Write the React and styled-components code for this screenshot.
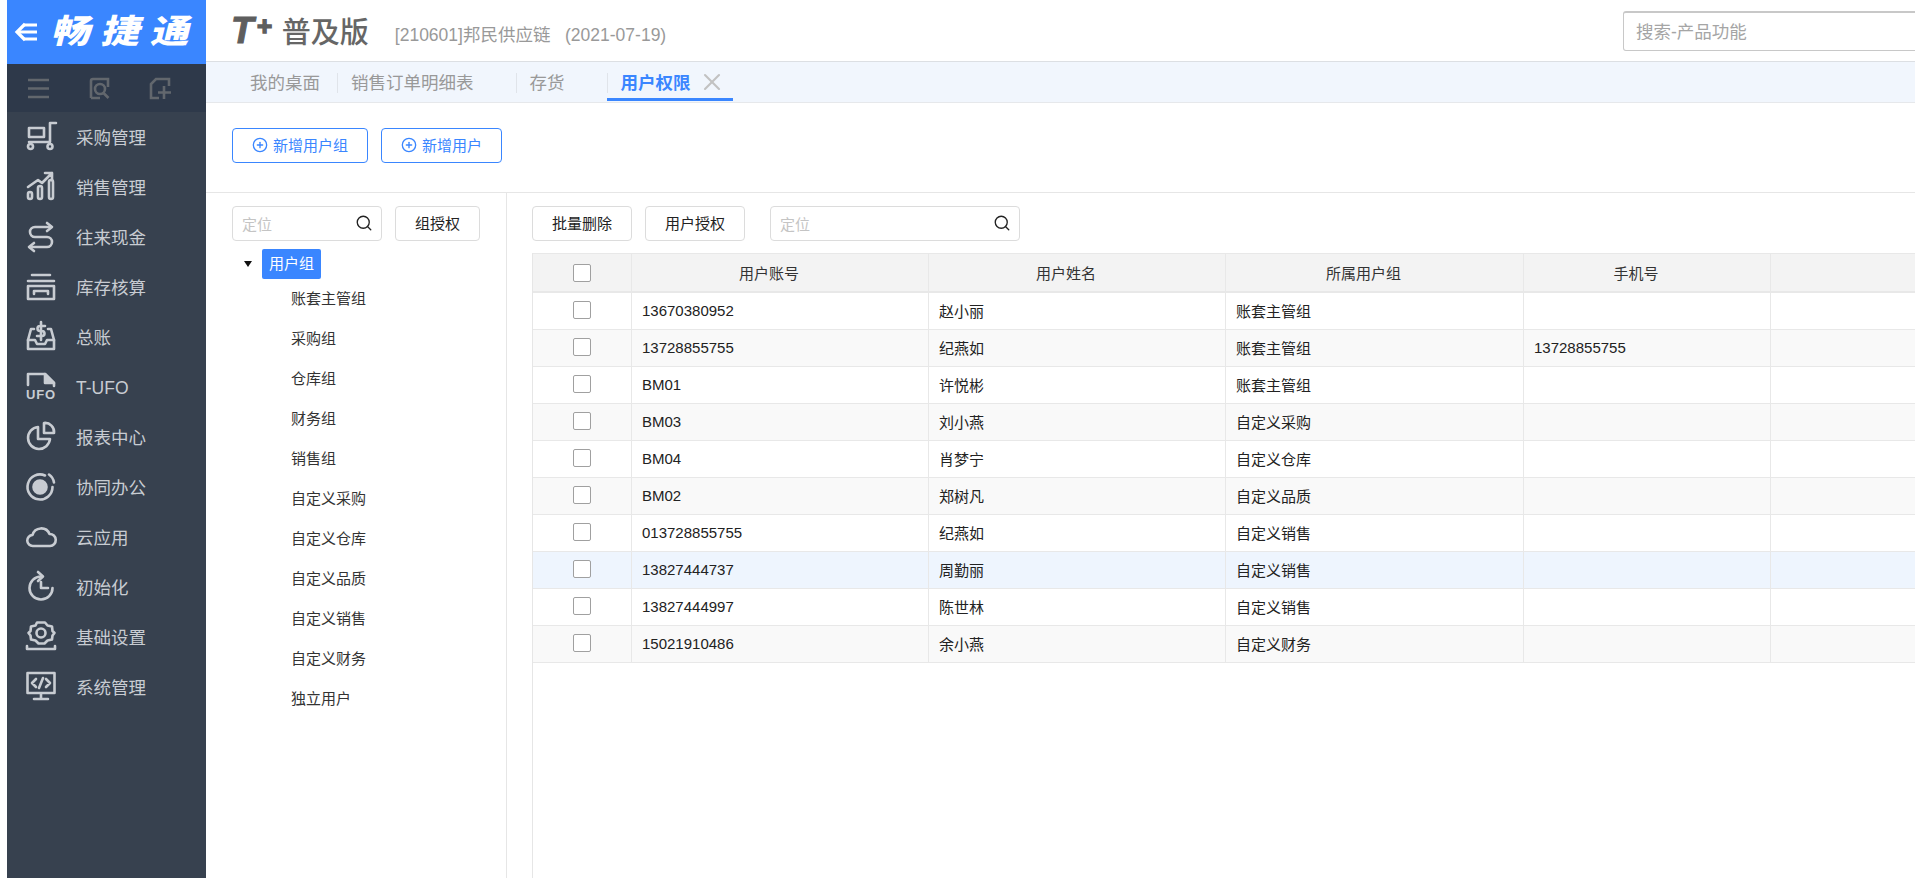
import styled, { createGlobalStyle } from "styled-components"
import { Search, CirclePlus, X } from "lucide-react"

const GlobalStyle = createGlobalStyle`
  html, body {
    margin: 0;
    height: 100%;
    overflow: hidden;
    background: #fff;
  }
  * {
    box-sizing: border-box;
  }
  body {
    font-family: "Liberation Sans", "Noto Sans CJK SC", sans-serif;
    font-size: 15px;
    color: #222;
  }
`

const Page = styled.div`
  display: flex;
  height: 878px;
  padding-left: 7px;
  overflow: hidden;
`

const Sidebar = styled.aside`
  width: 199px;
  flex-shrink: 0;
  background: #37414f;
  color: #c8ccd2;
  display: flex;
  flex-direction: column;
`

const Brand = styled.div`
  height: 64px;
  background: #3a86ff;
  color: #fff;
  display: flex;
  align-items: center;
  padding-left: 7px;
  gap: 10px;
`

const BrandName = styled.span`
  font-family: "Noto Sans CJK SC", sans-serif;
  font-weight: 900;
  font-size: 33px;
  letter-spacing: 9px;
  line-height: 1;
  white-space: nowrap;
  transform: skewX(-14deg) scaleX(1.18);
  transform-origin: left center;
  margin: -5px 0 0 6px;
`

const SideTools = styled.div`
  height: 48px;
  background: #2e394a;
  color: #62676d;
  display: flex;
  align-items: center;
  padding-left: 20px;
  gap: 38px;
`

const Menu = styled.nav`
  margin-top: -1px;
`

const MenuItem = styled.div`
  height: 50px;
  display: flex;
  align-items: center;
  padding-left: 19px;
  gap: 20px;
  font-size: 17.5px;
`

const MenuLabel = styled.span`
  line-height: 20px;
  padding-top: 3px;
`

const IconSvg = styled.svg`
  width: 30px;
  height: 30px;
  flex-shrink: 0;
  overflow: visible;
  fill: none;
  stroke: currentColor;
  stroke-width: 2.6;
  stroke-linecap: round;
  stroke-linejoin: round;
`

const ToolSvg = styled.svg`
  width: 23px;
  height: 23px;
  flex-shrink: 0;
  fill: none;
  stroke: currentColor;
  stroke-width: 2.6;
`

const Main = styled.main`
  flex: 1;
  min-width: 0;
  display: flex;
  flex-direction: column;
  overflow: hidden;
`

const Header = styled.header`
  height: 62px;
  flex-shrink: 0;
  border-bottom: 1px solid #dcdfe3;
  display: flex;
  align-items: center;
  overflow: hidden;
`

const Title = styled.div`
  flex: 0 0 1417px;
  display: flex;
  align-items: center;
  padding-left: 25px;
`

const LogoT = styled.span`
  font-weight: 700;
  font-style: italic;
  font-size: 37px;
  line-height: 1;
  color: #5e5e5e;
  -webkit-text-stroke: 1px #5e5e5e;
`

const LogoPlus = styled.span`
  font-weight: 700;
  font-style: italic;
  font-size: 26px;
  line-height: 1;
  color: #5e5e5e;
  -webkit-text-stroke: 1.5px #5e5e5e;
  margin: 0 0 10px 3px;
`

const Edition = styled.span`
  font-family: "Noto Sans CJK SC", sans-serif;
  font-weight: 500;
  font-size: 29px;
  line-height: 1;
  color: #666;
  margin-left: 10px;
`

const Account = styled.span`
  font-size: 17.5px;
  color: #999;
  margin-left: 26px;
  margin-top: 5px;
  white-space: pre;
`

const GlobalSearch = styled.div`
  flex: 0 0 320px;
  height: 40px;
  border: 1px solid #c8c8c8;
  border-top-width: 2px;
  border-radius: 3px;
  padding: 0 0 2px 12px;
  display: flex;
  align-items: center;
  font-size: 17.5px;
  color: #a5a5a5;
`

const TabBar = styled.div`
  height: 41px;
  flex-shrink: 0;
  background: #f1f6fd;
  border-bottom: 1px solid #e6e8eb;
  display: flex;
  padding-left: 29px;
`

const Tab = styled.div`
  height: 39px;
  padding-top: 11px;
  border-bottom: 3px solid ${p => (p.$active ? "#3a86ff" : "transparent")};
`

const TabInner = styled.div`
  height: 20px;
  display: flex;
  align-items: center;
  font-size: 17.5px;
  white-space: nowrap;
  padding-left: ${p => (p.$first ? 14 : 13)}px;
  padding-right: ${p => p.$pad}px;
  padding-bottom: 3px;
  border-left: 1px solid ${p => (p.$first ? "transparent" : "#e0e4ea")};
  color: ${p => (p.$active ? "#3a86ff" : "#999")};
  font-weight: ${p => (p.$active ? 700 : 400)};
  gap: 7px;
`

const TabClose = styled(X)`
  width: 28px;
  height: 28px;
  flex-shrink: 0;
  color: #c2c2c2;
  stroke-width: 1.8;
`

const ActionBar = styled.div`
  height: 90px;
  flex-shrink: 0;
  border-bottom: 1px solid #e6e6e6;
  padding: 25px 0 0 26px;
  display: flex;
  align-items: flex-start;
  gap: 13px;
`

const PrimaryButton = styled.button`
  height: 35px;
  padding: 0 19px 2px;
  background: #fff;
  border: 1px solid #3a86ff;
  border-radius: 4px;
  color: #3a86ff;
  font: inherit;
  font-size: 15px;
  display: flex;
  align-items: center;
  gap: 5px;
  svg {
    width: 16px;
    height: 16px;
    stroke-width: 2;
  }
`

const PlainButton = styled.button`
  height: 35px;
  padding: 0 19px 2px;
  background: #fff;
  border: 1px solid #dcdcdc;
  border-radius: 4px;
  color: #222;
  font: inherit;
  font-size: 15px;
  flex-shrink: 0;
`

const Content = styled.div`
  flex: 1;
  min-height: 0;
  display: flex;
`

const GroupPanel = styled.section`
  width: 301px;
  flex-shrink: 0;
  border-right: 1px solid #e6e6e6;
  padding: 13px 0 0 26px;
`

const PanelBar = styled.div`
  display: flex;
  align-items: center;
  gap: 13px;
`

const LocateBox = styled.div`
  width: ${p => p.$width}px;
  height: 35px;
  flex-shrink: 0;
  margin-left: ${p => p.$offset || 0}px;
  border: 1px solid #dcdcdc;
  border-radius: 4px;
  padding: 0 8px 1px 9px;
  display: flex;
  align-items: center;
  justify-content: space-between;
  color: #c4c4c4;
  font-size: 15px;
  svg {
    width: 18px;
    height: 18px;
    color: #222;
    stroke-width: 1.8;
  }
`

const TreeRoot = styled.div`
  display: flex;
  align-items: center;
  margin-top: 8px;
  padding-left: 12px;
  gap: 10px;
`

const Caret = styled.span`
  width: 0;
  height: 0;
  border-left: 4.5px solid transparent;
  border-right: 4.5px solid transparent;
  border-top: 6px solid #111;
`

const RootChip = styled.span`
  height: 30px;
  line-height: 30px;
  padding: 0 7px;
  background: #3a86ff;
  color: #fff;
  border-radius: 2px;
`

const TreeList = styled.ul`
  list-style: none;
  margin: 0;
  padding: 0 0 0 59px;
`

const TreeItem = styled.li`
  height: 40px;
  line-height: 40px;
  color: #333;
`

const UserPanel = styled.section`
  flex: 1;
  min-width: 0;
  padding: 13px 0 0 25px;
  display: flex;
  flex-direction: column;
  overflow: hidden;
`

const Table = styled.div`
  flex: 1;
  margin-top: 12px;
  border-left: 1px solid #e6e6e6;
  width: 1537px;
`

const Row = styled.div`
  display: grid;
  grid-template-columns: 99px 297px 297px 298px 247px 298px;
  height: 37px;
  border-bottom: 1px solid #e8e8e8;
  background: ${p => (p.$hover ? "#eef5fe" : p.$striped ? "#f9f9f9" : "#fff")};
`

const HeadRow = styled(Row)`
  height: 40px;
  background: #f3f3f3;
  border-top: 1px solid #e8e8e8;
  border-bottom-width: 2px;
`

const Cell = styled.div`
  display: flex;
  align-items: center;
  padding: 0 0 2px 10px;
  border-right: 1px solid #e8e8e8;
  white-space: nowrap;
`

const CheckCell = styled(Cell)`
  justify-content: center;
  padding: 0 0 ${p => (p.$head ? 0 : 2)}px 0;
`

const HeadCell = styled(Cell)`
  justify-content: center;
  padding: 0 22px 0 0;
  color: #333;
`

const Checkbox = styled.span`
  width: 18px;
  height: 18px;
  background: #fff;
  border: 1px solid #a0a0a0;
  border-radius: 2px;
`

const BackArrow = () => (
  <svg width="24" height="24" viewBox="0 0 24 24" fill="none" stroke="currentColor" strokeWidth="3.2">
    <path d="M11 4l-8 8 8 8" />
    <path d="M10 5h13M5 12h18M10 19h13" strokeWidth="2.8" />
  </svg>
)

const menuItems = [
  {
    label: "采购管理",
    icon: (
      <>
        <path d="M30 2h-6v19H3" />
        <rect x="3" y="7" width="15" height="9" />
        <circle cx="4.500" cy="25.500" r="2.500" />
        <circle cx="24" cy="25.500" r="2.500" />
      </>
    ),
  },
  {
    label: "销售管理",
    icon: (
      <>
        <rect x="2" y="21" width="4" height="7" rx="2" />
        <rect x="12" y="15" width="4" height="13" rx="2" />
        <rect x="23" y="9" width="4" height="19" rx="2" />
        <path d="M2 16l10-7 4 3 10-10M19 2h7v7" />
      </>
    ),
  },
  {
    label: "往来现金",
    icon: (
      <>
        <path d="M25 6H9a5 5 0 0 0 0 10h12a5 5 0 0 1 0 10H4" />
        <path d="M21 2l5 4-5 4M8 22l-5 4 5 4" />
      </>
    ),
  },
  {
    label: "库存核算",
    icon: (
      <>
        <path d="M6 4h18M2 10h26" />
        <rect x="2" y="15" width="26" height="13" />
        <path d="M8 23v-3h14v3" />
      </>
    ),
  },
  {
    label: "总账",
    icon: (
      <>
        <path d="M8 8H5L2 19v9h26v-9L25 8h-3" />
        <path d="M2 19h7l2 4h8l2-4h7" />
        <path d="M19 5h-5a2.500 2.500 0 0 0 0 5h2a2.500 2.500 0 0 1 0 5h-5M15 1v18" />
      </>
    ),
  },
  {
    label: "T-UFO",
    icon: (
      <>
        <path d="M2 14V3h17l9 9v3" />
        <path d="M19 3l9 9h-9z" fill="currentColor" />
        <text x="15" y="28" textAnchor="middle" fontSize="13" fontWeight="700" letterSpacing="0.800" fill="currentColor" stroke="none">
          UFO
        </text>
      </>
    ),
  },
  {
    label: "报表中心",
    icon: (
      <>
        <path d="M12 6a11 11 0 1 0 12 12H12z" />
        <path d="M18 2a9 9 0 0 1 10 10H18z" />
      </>
    ),
  },
  {
    label: "协同办公",
    icon: (
      <>
        <circle cx="14" cy="16" r="6.500" fill="currentColor" />
        <path d="M19 4.500A12.500 12.500 0 1 0 26.500 16" />
        <path d="M23 3.500a12 12 0 0 1 5 8" />
      </>
    ),
  },
  {
    label: "云应用",
    icon: <path d="M7 25a5.500 5.500 0 0 1-.5-11A9 9 0 0 1 23.500 13a6 6 0 0 1 .5 12z" />,
  },
  {
    label: "初始化",
    icon: (
      <>
        <path d="M15 5.500A11.500 11.500 0 1 0 26.500 17" />
        <path d="M12 1l5 4.500-5 4.500M15 11v6h7" />
      </>
    ),
  },
  {
    label: "基础设置",
    icon: (
      <>
        <path d="M11 1.500h8l2.500 3 4.500 1 .5 4.500 2 2-2 2.500-.5 4-4.500 1-3 3h-6l-3-3-4.500-1-.5-4-2-2.500 2-2 .5-4.500 4.500-1z" />
        <circle cx="15" cy="12" r="4.500" />
        <path d="M1 25v3h28v-3" />
      </>
    ),
  },
  {
    label: "系统管理",
    icon: (
      <>
        <rect x="1.500" y="2" width="27" height="20" />
        <path d="M10 8l-4 4 4 4M20 8l4 4-4 4M17 7l-4 10M15 23v4M8 28h14" />
      </>
    ),
  },
]

const groups = ["账套主管组", "采购组", "仓库组", "财务组", "销售组", "自定义采购", "自定义仓库", "自定义品质", "自定义销售", "自定义财务", "独立用户"]

const users = [
  { account: "13670380952", name: "赵小丽", group: "账套主管组", phone: "" },
  { account: "13728855755", name: "纪燕如", group: "账套主管组", phone: "13728855755" },
  { account: "BM01", name: "许悦彬", group: "账套主管组", phone: "" },
  { account: "BM03", name: "刘小燕", group: "自定义采购", phone: "" },
  { account: "BM04", name: "肖梦宁", group: "自定义仓库", phone: "" },
  { account: "BM02", name: "郑树凡", group: "自定义品质", phone: "" },
  { account: "013728855755", name: "纪燕如", group: "自定义销售", phone: "" },
  { account: "13827444737", name: "周勤丽", group: "自定义销售", phone: "", hover: true },
  { account: "13827444997", name: "陈世林", group: "自定义销售", phone: "" },
  { account: "15021910486", name: "余小燕", group: "自定义财务", phone: "" },
]

export default function App() {
  return (
    <Page>
      <GlobalStyle />
      <Sidebar>
        <Brand>
          <BackArrow />
          <BrandName>畅捷通</BrandName>
        </Brand>
        <SideTools>
          <ToolSvg viewBox="0 0 23 23">
            <path d="M1 3h21M1 11.500h21M1 20h21" />
          </ToolSvg>
          <ToolSvg viewBox="0 0 23 23">
            <path d="M3 21V4a2 2 0 0 1 2-2h15v8M3 21h9" />
            <circle cx="12" cy="12" r="5" />
            <path d="M15.500 16l5 5" />
          </ToolSvg>
          <ToolSvg viewBox="0 0 23 23">
            <path d="M20 9V2H7L2 7v14h8" />
            <path d="M15 9v13M9 15.500h13" />
          </ToolSvg>
        </SideTools>
        <Menu>
          {menuItems.map(item => (
            <MenuItem key={item.label}>
              <IconSvg viewBox="0 0 30 30">{item.icon}</IconSvg>
              <MenuLabel>{item.label}</MenuLabel>
            </MenuItem>
          ))}
        </Menu>
      </Sidebar>
      <Main>
        <Header>
          <Title>
            <LogoT>T</LogoT>
            <LogoPlus>+</LogoPlus>
            <Edition>普及版</Edition>
            <Account>{"[210601]邦民供应链   (2021-07-19)"}</Account>
          </Title>
          <GlobalSearch>搜索-产品功能</GlobalSearch>
        </Header>
        <TabBar>
          <Tab>
            <TabInner $first $pad={17}>我的桌面</TabInner>
          </Tab>
          <Tab>
            <TabInner $pad={42}>销售订单明细表</TabInner>
          </Tab>
          <Tab>
            <TabInner $pad={42}>存货</TabInner>
          </Tab>
          <Tab $active>
            <TabInner $active $pad={7}>
              用户权限
              <TabClose />
            </TabInner>
          </Tab>
        </TabBar>
        <ActionBar>
          <PrimaryButton>
            <CirclePlus />
            新增用户组
          </PrimaryButton>
          <PrimaryButton>
            <CirclePlus />
            新增用户
          </PrimaryButton>
        </ActionBar>
        <Content>
          <GroupPanel>
            <PanelBar>
              <LocateBox $width={150}>
                定位
                <Search />
              </LocateBox>
              <PlainButton>组授权</PlainButton>
            </PanelBar>
            <TreeRoot>
              <Caret />
              <RootChip>用户组</RootChip>
            </TreeRoot>
            <TreeList>
              {groups.map(g => (
                <TreeItem key={g}>{g}</TreeItem>
              ))}
            </TreeList>
          </GroupPanel>
          <UserPanel>
            <PanelBar>
              <PlainButton>批量删除</PlainButton>
              <PlainButton>用户授权</PlainButton>
              <LocateBox $width={250} $offset={12}>
                定位
                <Search />
              </LocateBox>
            </PanelBar>
            <Table>
              <HeadRow>
                <CheckCell $head>
                  <Checkbox />
                </CheckCell>
                <HeadCell>用户账号</HeadCell>
                <HeadCell>用户姓名</HeadCell>
                <HeadCell>所属用户组</HeadCell>
                <HeadCell>手机号</HeadCell>
                <HeadCell />
              </HeadRow>
              {users.map((u, i) => (
                <Row key={u.account} $striped={i % 2 === 1} $hover={u.hover}>
                  <CheckCell>
                    <Checkbox />
                  </CheckCell>
                  <Cell>{u.account}</Cell>
                  <Cell>{u.name}</Cell>
                  <Cell>{u.group}</Cell>
                  <Cell>{u.phone}</Cell>
                  <Cell />
                </Row>
              ))}
            </Table>
          </UserPanel>
        </Content>
      </Main>
    </Page>
  )
}
